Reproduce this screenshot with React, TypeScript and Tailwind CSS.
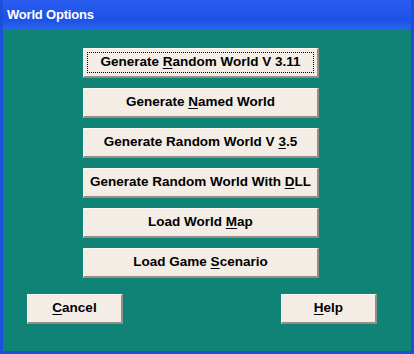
const Btn = ({
  pre,
  ul,
  post,
  w,
  focus,
}: {
  pre: string;
  ul: string;
  post: string;
  w: string;
  focus?: boolean;
}) => (
  <button
    className={`${w} h-[30px] bg-[#f3ede6] border-t border-l border-[#fbf8f4] border-r-2 border-b-2 border-r-[#968e86] border-b-[#968e86] p-[3px] text-[13.5px] font-bold text-black font-['Liberation_Sans',Arial,sans-serif]`}
  >
    <span
      className={`flex h-full w-full items-center justify-center ${
        focus ? "border border-dotted border-black" : ""
      }`}
    >
      <span className="whitespace-pre">
        {pre}
        <span className="underline underline-offset-2">{ul}</span>
        {post}
      </span>
    </span>
  </button>
);

export default function App() {
  return (
    <div className="w-[414px] h-[354px] bg-[#1b4fdc] flex flex-col px-[3px] pb-[3px]">
      {/* Title bar */}
      <div className="h-[29px] flex items-center pl-[4px] bg-[linear-gradient(#2a5cf0,#1d52e4_70%,#2a64f0)]">
        <span className="text-white font-bold text-[13px] font-['Liberation_Sans',Arial,sans-serif] tracking-[-0.2px]">
          World Options
        </span>
      </div>

      {/* Body */}
      <div className="flex-1 bg-[#0f8476] flex flex-col pt-[19px]">
        <div className="flex flex-col gap-[10px] pl-[80px]">
          <Btn w="w-[236px]" pre="Generate " ul="R" post="andom World V 3.11" focus />
          <Btn w="w-[236px]" pre="Generate " ul="N" post="amed World" />
          <Btn w="w-[236px]" pre="Generate Random World V " ul="3" post=".5" />
          <Btn w="w-[236px]" pre="Generate Random World With " ul="D" post="LL" />
          <Btn w="w-[236px]" pre="Load World " ul="M" post="ap" />
          <Btn w="w-[236px]" pre="Load Game " ul="S" post="cenario" />
        </div>
        <div className="flex justify-between pl-[24px] pr-[34px] mt-[16px]">
          <Btn w="w-[96px]" pre="" ul="C" post="ancel" />
          <Btn w="w-[96px]" pre="" ul="H" post="elp" />
        </div>
      </div>
    </div>
  );
}
